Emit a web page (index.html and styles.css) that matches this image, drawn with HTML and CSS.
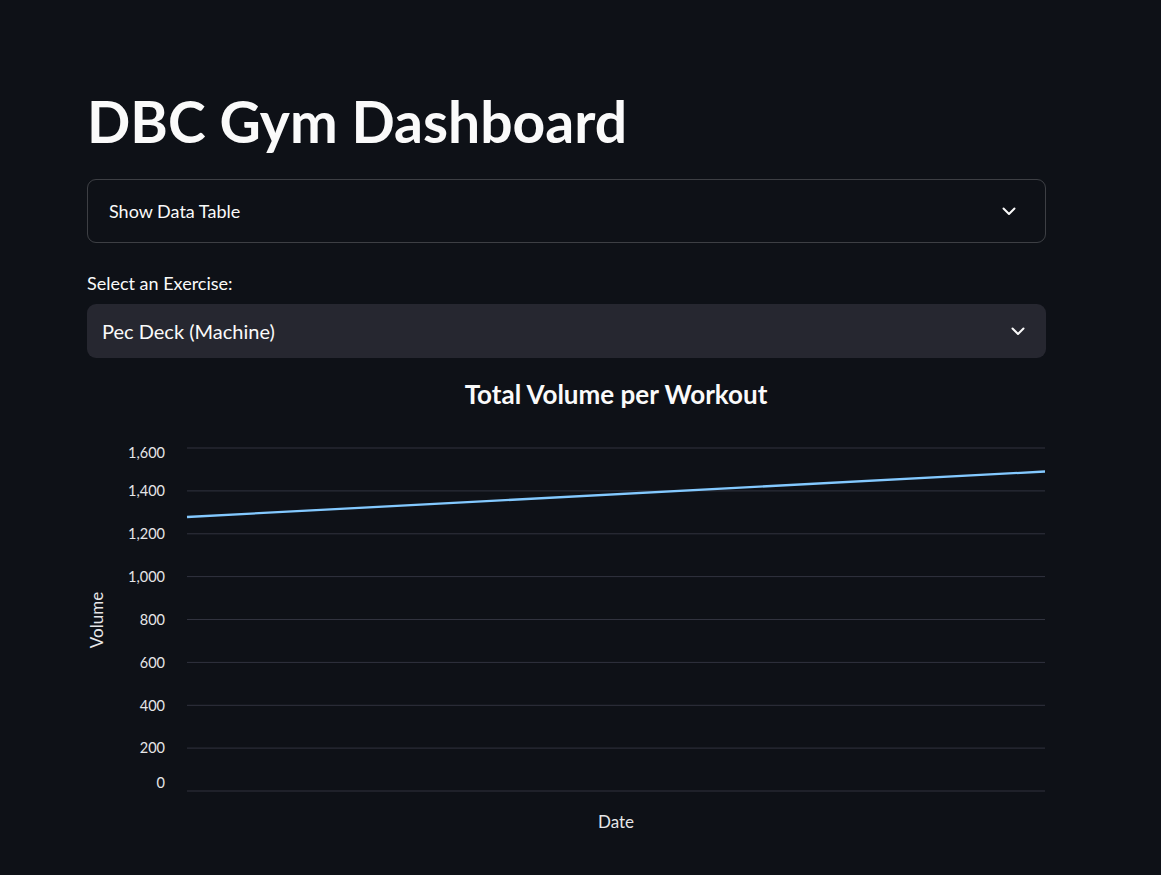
FILE: index.html
```html
<!DOCTYPE html>
<html lang="en">
<head>
<meta charset="utf-8">
<title>DBC Gym Dashboard</title>
<link rel="stylesheet" href="styles.css">
</head>
<body>
<main class="main">
  <h1 class="title">DBC Gym Dashboard</h1>

  <div class="expander">
    <span class="expander-label">Show Data Table</span>
    <svg class="chev" width="14" height="9" viewBox="0 0 14 9"><path d="M1.5 1.5 L7 7 L12.5 1.5" fill="none" stroke="#fafafa" stroke-width="2" stroke-linecap="round" stroke-linejoin="round"/></svg>
  </div>

  <label class="field-label">Select an Exercise:</label>
  <div class="select">
    <span class="select-value">Pec Deck (Machine)</span>
    <svg class="chev" width="14" height="9" viewBox="0 0 14 9"><path d="M1.5 1.5 L7 7 L12.5 1.5" fill="none" stroke="#fafafa" stroke-width="2" stroke-linecap="round" stroke-linejoin="round"/></svg>
  </div>

  <div class="chart">
    <svg class="chart-svg" width="959" height="465" viewBox="0 0 959 465">
      <text class="chart-title" x="529" y="28" text-anchor="middle">Total Volume per Workout</text>
      <g class="grid">
        <line x1="100" x2="958" y1="72" y2="72"/>
        <line x1="100" x2="958" y1="114.9" y2="114.9"/>
        <line x1="100" x2="958" y1="157.8" y2="157.8"/>
        <line x1="100" x2="958" y1="200.6" y2="200.6"/>
        <line x1="100" x2="958" y1="243.5" y2="243.5"/>
        <line x1="100" x2="958" y1="286.4" y2="286.4"/>
        <line x1="100" x2="958" y1="329.3" y2="329.3"/>
        <line x1="100" x2="958" y1="372.1" y2="372.1"/>
        <line x1="100" x2="958" y1="415" y2="415"/>
      </g>
      <g class="ticks" text-anchor="end">
        <text x="78" y="82">1,600</text>
        <text x="78" y="120">1,400</text>
        <text x="78" y="163">1,200</text>
        <text x="78" y="206">1,000</text>
        <text x="78" y="249">800</text>
        <text x="78" y="292">600</text>
        <text x="78" y="335">400</text>
        <text x="78" y="377">200</text>
        <text x="78" y="412">0</text>
      </g>
      <polyline class="series" points="100,141 958,95.5"/>
      <text class="axis-title" x="0" y="0" text-anchor="middle" transform="translate(16 244) rotate(-90)">Volume</text>
      <text class="axis-title" x="529" y="452" text-anchor="middle">Date</text>
    </svg>
  </div>
</main>
</body>
</html>
```

FILE: styles.css
```css
html, body {
  margin: 0;
  padding: 0;
  background: #0e1117;
  color: #fafafa;
  font-family: "Lato", "Source Sans Pro", "Liberation Sans", sans-serif;
}

.main {
  width: 959px;
  padding: 87px 0 0 87px;
  display: flex;
  flex-direction: column;
}

.title {
  margin: 0;
  font-size: 57px;
  line-height: 68px;
  font-weight: 700;
  letter-spacing: 0;
  color: #fafafa;
}

.expander {
  margin-top: 24px;
  height: 62px;
  border: 1px solid rgba(250, 250, 250, 0.2);
  border-radius: 9px;
  display: flex;
  align-items: center;
  justify-content: space-between;
  padding: 0 29px 0 21px;
}

.expander-label {
  font-size: 18px;
}

.field-label {
  margin-top: 30px;
  font-size: 18px;
  line-height: 20px;
}

.select {
  margin-top: 11px;
  height: 54px;
  background: #262730;
  border-radius: 9px;
  display: flex;
  align-items: center;
  justify-content: space-between;
  padding: 0 21px 0 15px;
}

.select-value {
  font-size: 20px;
}

.chart {
  margin-top: 18px;
}

.chart-svg {
  display: block;
}

.chart-title {
  font-size: 26px;
  font-weight: 700;
  fill: #fafafa;
}

.grid line {
  stroke: #31333f;
  stroke-width: 1;
}

.ticks text {
  font-size: 14.5px;
  fill: #e6e6e8;
}

.series {
  fill: none;
  stroke: #83c9ff;
  stroke-width: 2.3;
}

.axis-title {
  font-size: 17px;
  fill: #e6e6e8;
}
```
